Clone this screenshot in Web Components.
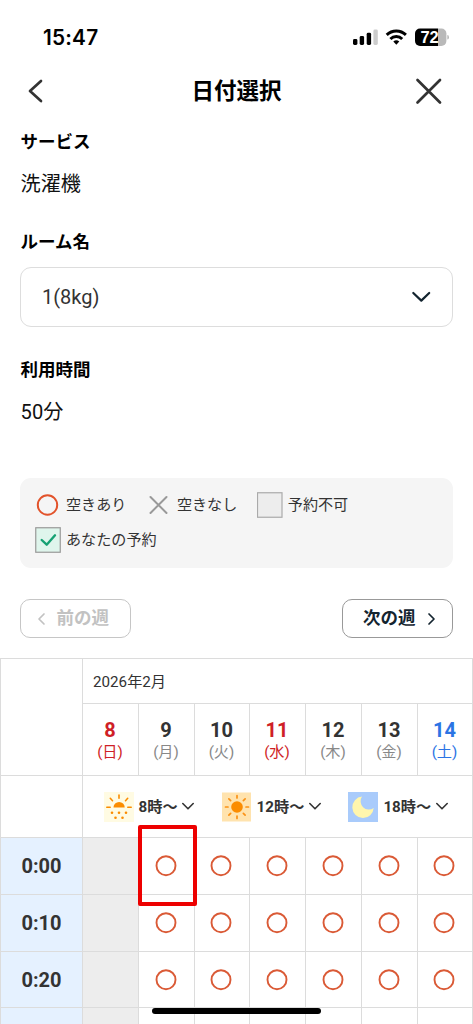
<!DOCTYPE html>
<html lang="ja">
<head>
<meta charset="utf-8">
<title>日付選択</title>
<style>
body{margin:0;background:#fff;font-family:Roboto,"Noto Sans CJK JP",sans-serif;color:#000;overflow:hidden;height:1024px}
</style>
</head>
<body>
<booking-screen></booking-screen>
<script>
const define = (name, html) => customElements.define(name, class extends HTMLElement {
  connectedCallback() {
    if (this.shadowRoot) return;
    const t = document.createElement('template');
    t.innerHTML = typeof html === 'function' ? html(this) : html;
    this.attachShadow({mode: 'open'}).append(t.content.cloneNode(true));
  }
});

define('status-bar', `
<style>
:host{display:flex;height:60px;box-sizing:border-box;padding:14px 24px 0 43px;justify-content:space-between;align-items:flex-start}
.time{font:600 20.8px/47px Inter,sans-serif;letter-spacing:.2px}
svg{display:block}
.icons{display:flex;padding-top:14px}
text{font:700 16.5px "Liberation Sans",sans-serif}
</style>
<span class="time">15:47</span>
<div class="icons"><svg width="97" height="20" viewBox="352 28 97 20">
<rect x="353" y="39" width="4.4" height="6" rx="1.4"/><rect x="359.7" y="36" width="4.4" height="9" rx="1.4"/><rect x="366.7" y="32.8" width="4.4" height="12.2" rx="1.4"/><rect x="373.4" y="29.6" width="4.4" height="15.4" rx="1.4" fill="#ccc"/>
<g fill="none" stroke="#000" stroke-width="2.9"><path d="M386.7 34.9a13.6 13.6 0 0 1 19.2 0M390.4 39a8.2 8.2 0 0 1 11.8 0"/></g><path d="M396.3 44.7l-3-3.1a4.4 4.4 0 0 1 6 0z"/>
<path d="M420 28.5h18v17.4h-18a5 5 0 0 1-5-5v-7.4a5 5 0 0 1 5-5z"/><path d="M438 28.5h3.4a5 5 0 0 1 5 5v7.4a5 5 0 0 1-5 5H438z" fill="#b9b9b9"/><path d="M447.3 35q1.7 0 1.7 2.2t-1.7 2.3z" fill="#b9b9b9"/>
<text x="420.4" y="43.2" fill="#fff">72</text></svg></div>`);

define('nav-bar', `
<style>
:host{display:grid;grid-template-columns:30px 1fr 30px;align-items:center;height:62px;padding:0 30px 0 27px;box-sizing:border-box}
.t{text-align:center;font-weight:700;font-size:22.5px;line-height:32px;padding-left:3px}
svg{display:block;fill:none;stroke:#333;stroke-width:2.7;stroke-linecap:round;stroke-linejoin:round}
</style>
<svg width="18" height="26"><path d="M14 3L3 13l11 10"/></svg>
<span class="t"><slot></slot></span>
<svg width="30" height="30"><path d="M4.5 4l22.5 22.5M27 4L4.5 26.5"/></svg>`);

define('field-label', `<style>:host{display:block;font-weight:700;font-size:17.5px;line-height:26px}</style><slot></slot>`);
define('field-value', `<style>:host{display:block;font-size:20.1px;line-height:30px;color:#111}</style><slot></slot>`);

define('select-box', `
<style>
:host{display:flex;align-items:center;justify-content:space-between;height:60px;box-sizing:border-box;border:1px solid #ddd;border-radius:11px;padding:0 21px 0 21px;font-size:20px;color:#333}
svg{fill:none;stroke:#13242f;stroke-width:2.2;stroke-linecap:round;stroke-linejoin:round}
</style>
<slot></slot><svg width="20" height="12"><path d="M2.3 2l8 7.6L18.2 2"/></svg>`);

const legendIcons = {
  ok: `<circle cx="12.5" cy="13" r="9.7" fill="none" stroke="#e2532b" stroke-width="2"/>`,
  full: `<path d="M4.5 5l16 16M20.5 5L4.5 21" stroke="#999" stroke-width="2" stroke-linecap="round"/>`,
  off: `<rect x=".5" y=".75" width="24.5" height="24.5" fill="#ededed" stroke="#aaa" stroke-width="1.2"/>`,
  mine: `<rect x=".75" y=".75" width="24.5" height="24.5" fill="#dff5ec" stroke="#999" stroke-width="1.2"/><path d="M6.7 13l5 4.7L20 8.3" fill="none" stroke="#16a173" stroke-width="2.4" stroke-linecap="round" stroke-linejoin="round"/>`
};
define('legend-item', el => `
<style>:host{display:flex;align-items:center;gap:5px;height:26px;font-size:15.1px;color:#333}svg{display:block}span{line-height:24px}</style>
<svg width="26" height="26">${legendIcons[el.getAttribute('kind')]}</svg><span><slot></slot></span>`);
define('legend-panel', `
<style>:host{display:flex;flex-wrap:wrap;align-content:flex-start;gap:9px 19.5px;height:90px;box-sizing:border-box;padding:14px 15px;background:#f5f5f5;border-radius:11px}</style><slot></slot>`);

define('week-button', el => {
  const next = el.getAttribute('dir') === 'next';
  return `
<style>
:host{display:flex;align-items:center;width:111px;height:39px;box-sizing:border-box;border:1px solid ${next ? '#999' : '#c6c6c6'};border-radius:10px;font-weight:700;font-size:17.5px;color:${next ? '#13242f' : '#c2c2c2'};padding:0 ${next ? '16px 0 20px' : '21px 0 16px'};justify-content:space-between}
svg{fill:none;stroke:currentColor;stroke-width:1.7;stroke-linecap:round;stroke-linejoin:round}
span{line-height:26px;padding-bottom:1px}
</style>
${next ? '<span><slot></slot></span><svg width="9" height="14"><path d="M2 2l5 5-5 5"/></svg>' : '<svg width="9" height="14"><path d="M7 2l-5 5 5 5"/></svg><span><slot></slot></span>'}`;
});

define('day-head', el => {
  const c = {sun:['#cf1f27','#cf1f27'], sat:['#2b74e4','#2b74e4']}[el.getAttribute('tone')] || ['#333','#888'];
  return `
<style>:host{display:block;text-align:center;padding-top:14px;padding-right:1px;box-sizing:border-box}
b{display:block;font-size:20px;line-height:24px;color:${c[0]}}
span{display:block;font-size:15.2px;line-height:21px;color:${c[1]}}</style>
<b><slot></slot></b><span>(${el.getAttribute('day')})</span>`;
});

const ray = (n, r1, r2, from, step) => Array.from({length: n}, (_, i) => {
  const a = (from + i * step) * Math.PI / 180, c = Math.cos(a), s = Math.sin(a);
  return `M${(15+c*r1).toFixed(2)} ${(15+s*r1).toFixed(2)}L${(15+c*r2).toFixed(2)} ${(15+s*r2).toFixed(2)}`;
}).join('');
const jumpIcons = {
  morning: `<rect width="30" height="30" fill="#fffbe3"/><path d="M9.5 15.5a5.6 5.6 0 0 1 11.2 0z" fill="#fb8c00"/><path d="M15 3v3.2M6.3 6.3l2.2 2.4M23.7 6.3l-2.2 2.4M2.8 15.2h3.4M23.8 15.2h3.4" stroke="#fb8c00" stroke-width="1.6" stroke-linecap="round"/><g fill="#fb8c00"><circle cx="8" cy="20.7" r="1.3"/><circle cx="15" cy="20.7" r="1.3"/><circle cx="22" cy="20.7" r="1.3"/><circle cx="11.5" cy="25.7" r="1.3"/><circle cx="18.5" cy="25.7" r="1.3"/></g>`,
  noon: `<rect width="29" height="29" y=".5" fill="#ffe3ae"/><circle cx="15" cy="15" r="5.8" fill="#fb8c00"/><path d="${ray(8, 9, 11.5, 0, 45)}" stroke="#fb9216" stroke-width="1.7" stroke-linecap="round"/>`,
  night: `<rect width="30" height="30" fill="#a9cbfb"/><path d="M14 4.6A8.3 8.3 0 0 0 25.7 16 10.7 10.7 0 1 1 14 4.6z" fill="#fff6ad"/>`
};
define('time-jump', el => `
<style>:host{display:flex;align-items:center;font-weight:700;font-size:15.2px;color:#333;white-space:nowrap}
.i{display:block;margin-right:5px}.c{margin-left:3.5px;fill:none;stroke:#333;stroke-width:1.6;stroke-linecap:round;stroke-linejoin:round}span{line-height:22px}</style>
<svg class="i" width="30" height="30">${jumpIcons[el.getAttribute('kind')]}</svg><span><slot></slot></span><svg class="c" width="14" height="9"><path d="M1.8 1.5l5.2 5.3 5.2-5.3"/></svg>`);

define('slot-mark', el => `
<style>:host{display:grid;place-items:center;position:relative;padding-right:2px}svg{display:block}
.sel{position:absolute;left:-1px;top:-13px;width:59px;height:81px;box-sizing:border-box;border:4px solid #ed0000;border-radius:2px;z-index:2}</style>
<svg width="22" height="22"><circle cx="11" cy="10.7" r="9.5" fill="none" stroke="#da5a36" stroke-width="1.9"/></svg>${el.hasAttribute('selected') ? '<div class="sel"></div>' : ''}`);

const days = [['8','日','sun'],['9','月',''],['10','火',''],['11','水','sun'],['12','木',''],['13','金',''],['14','土','sat']];
const times = ['0:00','0:10','0:20',''];
define('week-table', `
<style>
:host{display:grid;grid-template-columns:82px 56px 56px 55px 56px 56px 56px 56px;grid-template-rows:45px 72px 62px 57px 57px 56px 17px;width:473px;box-sizing:border-box}
:host>*{border-left:1px solid #dcdcdc;border-top:1px solid #dcdcdc;box-sizing:border-box;min-width:0}
.end{border-right:1px solid #dcdcdc}
.corner{grid-row:span 2}
.month{grid-column:span 7;font-size:15.2px;line-height:46px;color:#333;padding-left:10px}
.jumps{grid-column:span 7;display:flex;align-items:center;padding-left:20.5px;gap:26.5px}
.time{background:#e5f1ff;font-weight:700;font-size:20px;color:#333;display:grid;place-items:center}
.off{background:#ededed}
</style>
<div class="corner"></div><div class="month end">2026年2月</div>
${days.map(([n,d,t],i)=>`<day-head tone="${t}" day="${d}" class="${i===6?'end':''}">${n}</day-head>`).join('')}
<div></div><div class="jumps end"><time-jump kind="morning">8時〜</time-jump><time-jump kind="noon">12時〜</time-jump><time-jump kind="night">18時〜</time-jump></div>
${times.map((t,r)=>`<div class="time">${t}</div><div class="off"></div>`+days.slice(1).map((_,i)=>{
  const c = i===5?'class="end"':'';
  return t ? `<slot-mark ${c} ${r===0&&i===0?'selected':''}></slot-mark>` : `<div ${c}></div>`;
}).join('')).join('')}`);

define('booking-screen', `
<style>
:host{display:block;height:1024px;overflow:hidden;position:relative}
.form{padding:7px 20px 0;display:flex;flex-direction:column}
field-label,field-value{padding-left:.6px}
field-value{margin-top:14px}
.room{margin-top:30px}select-box{margin-top:12px}
.dur{margin-top:30px}legend-panel{margin-top:51px}
.weeks{display:flex;justify-content:space-between;margin:31px 0 20px}
.home{position:absolute;left:152px;top:1008px;width:169px;height:6px;border-radius:3px;background:#000}
</style>
<status-bar></status-bar>
<nav-bar>日付選択</nav-bar>
<div class="form">
<field-label>サービス</field-label><field-value>洗濯機</field-value>
<field-label class="room">ルーム名</field-label><select-box>1(8kg)</select-box>
<field-label class="dur">利用時間</field-label><field-value>50分</field-value>
<legend-panel><legend-item kind="ok">空きあり</legend-item><legend-item kind="full">空きなし</legend-item><legend-item kind="off">予約不可</legend-item><legend-item kind="mine">あなたの予約</legend-item></legend-panel>
<div class="weeks"><week-button dir="prev">前の週</week-button><week-button dir="next">次の週</week-button></div>
</div>
<week-table></week-table>
<div class="home"></div>`);
</script>
</body>
</html>
